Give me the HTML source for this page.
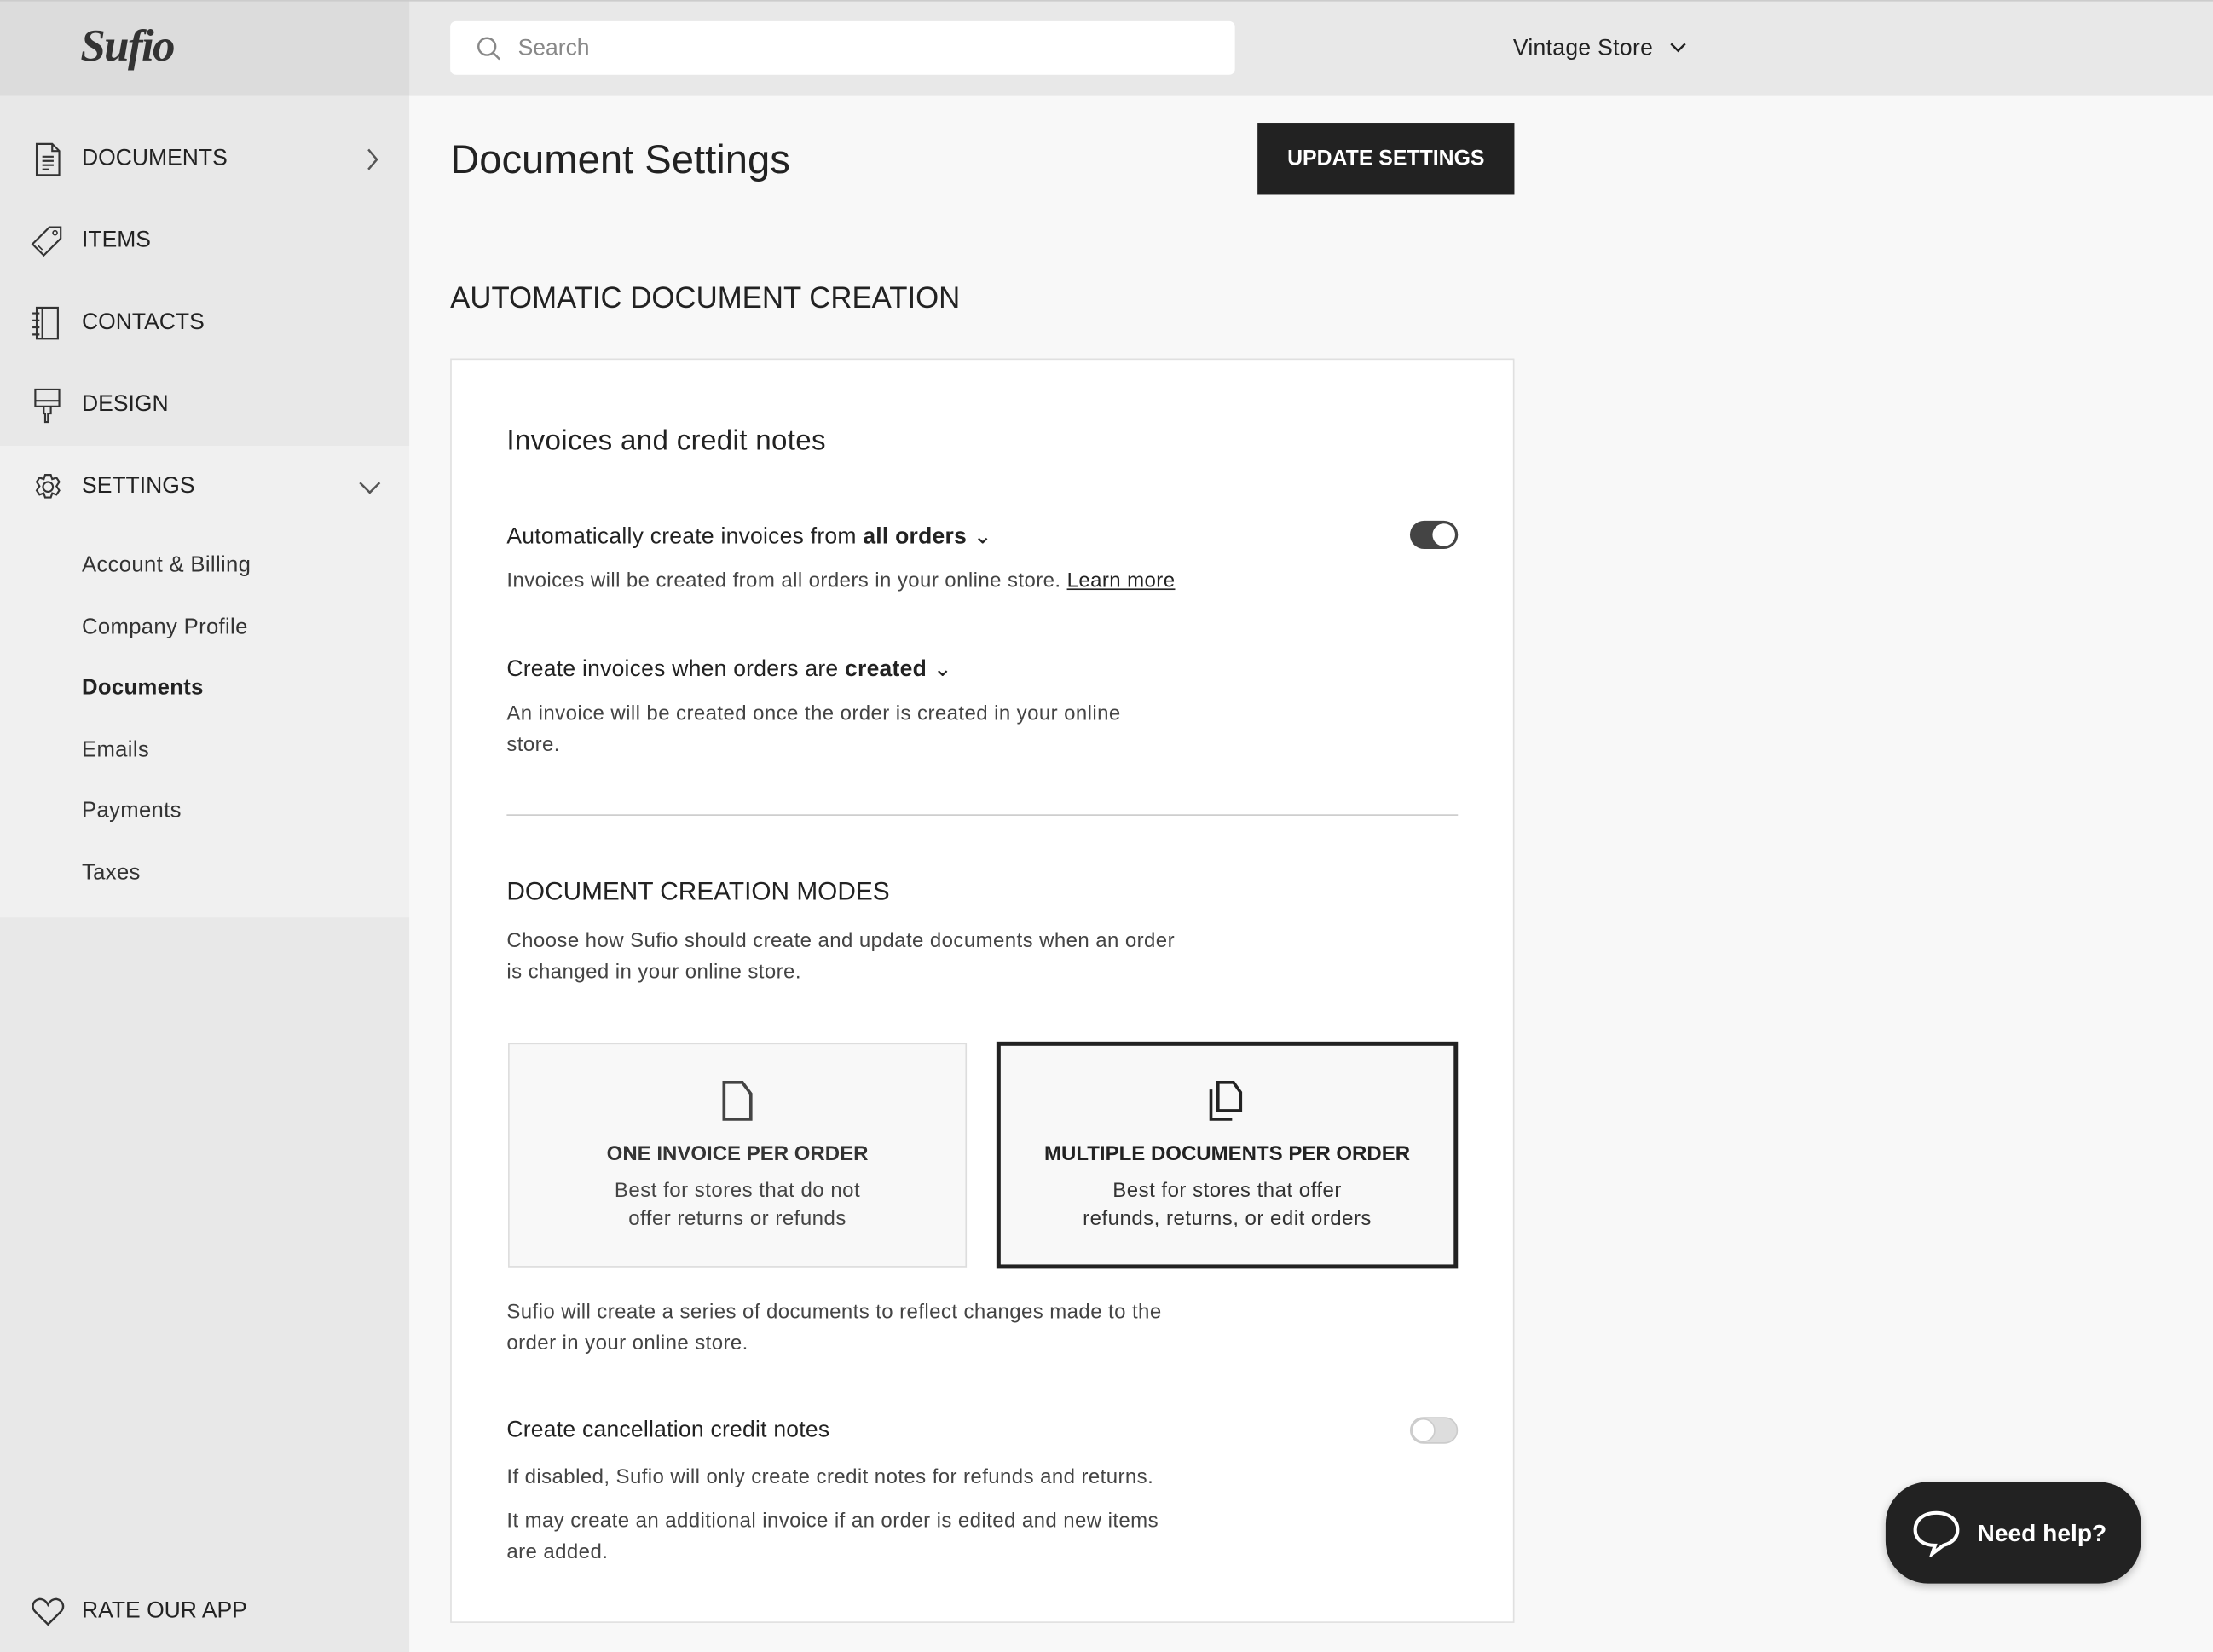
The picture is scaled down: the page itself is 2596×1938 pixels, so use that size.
<!DOCTYPE html>
<html><head><meta charset="utf-8"><style>
*{box-sizing:border-box;margin:0;padding:0}
html,body{width:2596px;height:1938px;overflow:hidden;background:#f8f8f8}
#w{width:1568px;height:1171px;transform:scale(1.65561);transform-origin:0 0;position:relative;font-family:"Liberation Sans",sans-serif;color:#222}
.a{position:absolute;white-space:nowrap}
.sb{position:absolute;left:0;width:290px}
.nav{position:absolute;left:58px;font-size:16px;color:#222;transform:translateY(-50%)}
.sub{position:absolute;left:58px;font-size:15.5px;letter-spacing:0.2px;color:#333;transform:translateY(-50%)}
.t{transform:translateY(-50%)}
.p{font-size:14.5px;letter-spacing:0.25px;color:#444;line-height:22px}
svg{position:absolute}
</style></head><body><div id="w">
<div class="a" style="left:0;top:0;width:1568px;height:68px;background:#e8e8e8;border-top:1px solid #ccc"></div>
<div class="sb" style="top:0;height:68px;background:#dcdcdc;border-top:1px solid #ccc"></div>
<div class="a" style="left:57px;top:14px;font-family:'Liberation Serif',serif;font-style:italic;font-size:32px;color:#333;font-weight:bold;letter-spacing:-1px">Sufio</div>
<div class="sb" style="top:68px;height:248px;background:#e8e8e8"></div>
<div class="sb" style="top:316px;height:334px;background:#f0f0f0"></div>
<div class="sb" style="top:650px;height:521px;background:#e8e8e8"></div>
<div class="a" style="left:319px;top:15px;width:556px;height:38px;background:#fff;border-radius:4px"></div>
<svg style="left:337px;top:25px" width="20" height="20" viewBox="0 0 20 20"><circle cx="8" cy="8" r="6" fill="none" stroke="#888" stroke-width="1.5"/><path d="M12.5 12.5L17 17" stroke="#888" stroke-width="1.5"/></svg>
<div class="a t" style="left:367px;top:35px;font-size:16px;color:#888">Search</div>
<div class="a t" style="left:1072px;top:35px;font-size:16px;color:#222;letter-spacing:0.2px">Vintage Store</div>
<svg style="left:1182px;top:29px" width="14" height="10" viewBox="0 0 14 10"><path d="M2 2l5 5 5-5" fill="none" stroke="#222" stroke-width="1.5"/></svg>

<svg style="left:23px;top:101px" width="22" height="24" viewBox="0 0 22 24"><path d="M3 1h11l5 5v17H3z M14 1v5h5 M7 10h8M7 13h8M7 16h8M7 19h5" fill="none" stroke="#333" stroke-width="1.3"/></svg>
<div class="nav" style="top:113px">DOCUMENTS</div>
<svg style="left:258px;top:104px" width="12" height="18" viewBox="0 0 12 18"><path d="M3 2l6 7-6 7" fill="none" stroke="#555" stroke-width="1.5"/></svg>
<svg style="left:21px;top:159px" width="24" height="24" viewBox="0 0 24 24"><path d="M14 2h8v8L10 22 2 14z" fill="none" stroke="#333" stroke-width="1.3"/><circle cx="18" cy="6" r="1.5" fill="none" stroke="#333"/><path d="M6 15l3 3" stroke="#333"/></svg>
<div class="nav" style="top:171px">ITEMS</div>
<svg style="left:22px;top:217px" width="22" height="24" viewBox="0 0 22 24"><path d="M4 1h15v22H4z M8 1v22 M1 5h5M1 10h5M1 15h5M1 20h5" fill="none" stroke="#333" stroke-width="1.3"/></svg>
<div class="nav" style="top:229px">CONTACTS</div>
<svg style="left:23px;top:275px" width="22" height="26" viewBox="0 0 22 26"><path d="M2 1h17v12H2z M2 9h17 M8 13h5v5h-2v6h-2v-6h-1z" fill="none" stroke="#333" stroke-width="1.3"/></svg>
<div class="nav" style="top:287px">DESIGN</div>
<svg style="left:22px;top:333px" width="24" height="24" viewBox="0 0 24 24"><path d="M10 1h4l1 3 3-1 2 3-2 3 2 3-2 3-3-1-1 3h-4l-1-3-3 1-2-3 2-3-2-3 2-3 3 1z" fill="none" stroke="#333" stroke-width="1.3" transform="translate(0 2.5)"/><circle cx="12" cy="12" r="3.5" fill="none" stroke="#333" stroke-width="1.3"/></svg>
<div class="nav" style="top:345px">SETTINGS</div>
<svg style="left:253px;top:339px" width="18" height="12" viewBox="0 0 18 12"><path d="M2 3l7 7 7-7" fill="none" stroke="#555" stroke-width="1.5"/></svg>
<div class="sub" style="top:401px">Account &amp; Billing</div>
<div class="sub" style="top:445px">Company Profile</div>
<div class="sub" style="top:488px;font-weight:bold;color:#222">Documents</div>
<div class="sub" style="top:532px">Emails</div>
<div class="sub" style="top:575px">Payments</div>
<div class="sub" style="top:619px">Taxes</div>
<svg style="left:22px;top:1131px" width="24" height="22" viewBox="0 0 24 22"><path d="M12 20L3 11C0 8 1 3 6 2c3 0 5 2 6 4 1-2 3-4 6-4 5 1 6 6 3 9z" fill="none" stroke="#333" stroke-width="1.5"/></svg>
<div class="nav" style="top:1142px">RATE OUR APP</div>

<div class="a t" style="left:319px;top:114px;font-size:28.5px;color:#222">Document Settings</div>
<div class="a" style="left:891px;top:87px;width:182px;height:51px;background:#222;color:#fff;font-size:15px;font-weight:bold;line-height:51px;text-align:center">UPDATE SETTINGS</div>
<div class="a t" style="left:319px;top:212px;font-size:21px;color:#222">AUTOMATIC DOCUMENT CREATION</div>
<div class="a" style="left:319px;top:254px;width:754px;height:896px;background:#fff;border:1px solid #e0e0e0"></div>
<div class="a t" style="left:359px;top:313px;font-size:20px;letter-spacing:0.2px">Invoices and credit notes</div>
<div class="a t" style="left:359px;top:380px;font-size:16px;letter-spacing:0.15px">Automatically create invoices from <b>all orders</b> &#8964;</div>
<div class="a" style="left:999px;top:369px;width:34px;height:20px;border-radius:10px;background:#444"></div>
<div class="a" style="left:1015px;top:371px;width:16px;height:16px;border-radius:8px;background:#fff"></div>
<div class="a t p" style="left:359px;top:412px">Invoices will be created from all orders in your online store. <u style="color:#222">Learn more</u></div>
<div class="a t" style="left:359px;top:474px;font-size:16px;letter-spacing:0.15px">Create invoices when orders are <b>created</b> &#8964;</div>
<div class="a p" style="left:359px;top:495px">An invoice will be created once the order is created in your online<br>store.</div>
<div class="a" style="left:359px;top:577px;width:674px;height:1px;background:#ccc"></div>
<div class="a t" style="left:359px;top:632px;font-size:18px">DOCUMENT CREATION MODES</div>
<div class="a p" style="left:359px;top:656px">Choose how Sufio should create and update documents when an order<br>is changed in your online store.</div>
<div class="a" style="left:360px;top:739px;width:325px;height:159px;background:#f8f8f8;border:1px solid #ddd"></div>
<svg style="left:511px;top:765px" width="24" height="30" viewBox="0 0 24 30"><path d="M2 2h13l6 8v18H2z" fill="none" stroke="#444" stroke-width="2.2"/></svg>
<div class="a" style="left:360px;top:810px;width:325px;text-align:center;font-size:14.5px;font-weight:bold;color:#333">ONE INVOICE PER ORDER</div>
<div class="a" style="left:360px;top:834px;width:325px;text-align:center;font-size:14.5px;letter-spacing:0.3px;line-height:20px;color:#444">Best for stores that do not<br>offer returns or refunds</div>
<div class="a" style="left:706px;top:738px;width:327px;height:161px;background:#f8f8f8;border:3px solid #222"></div>
<svg style="left:855px;top:765px" width="28" height="30" viewBox="0 0 28 30"><path d="M8 2h11l5 7v13H8z" fill="none" stroke="#222" stroke-width="2.2"/><path d="M3 7v21h15" fill="none" stroke="#222" stroke-width="2.2"/></svg>
<div class="a" style="left:706px;top:810px;width:327px;text-align:center;font-size:14.5px;font-weight:bold;color:#222">MULTIPLE DOCUMENTS PER ORDER</div>
<div class="a" style="left:706px;top:834px;width:327px;text-align:center;font-size:14.5px;letter-spacing:0.3px;line-height:20px;color:#333">Best for stores that offer<br>refunds, returns, or edit orders</div>
<div class="a p" style="left:359px;top:919px">Sufio will create a series of documents to reflect changes made to the<br>order in your online store.</div>
<div class="a t" style="left:359px;top:1014px;font-size:16px;letter-spacing:0.15px">Create cancellation credit notes</div>
<div class="a" style="left:999px;top:1004px;width:34px;height:19px;border-radius:10px;background:#ddd;border:1px solid #ccc"></div>
<div class="a" style="left:1000px;top:1005px;width:17px;height:17px;border-radius:9px;background:#fff;border:1px solid #ccc"></div>
<div class="a t p" style="left:359px;top:1047px">If disabled, Sufio will only create credit notes for refunds and returns.</div>
<div class="a p" style="left:359px;top:1067px">It may create an additional invoice if an order is edited and new items<br>are added.</div>
<div class="a" style="left:1336px;top:1050px;width:181px;height:72px;border-radius:30px;background:#222;box-shadow:0 2px 6px rgba(0,0,0,.25)"></div>
<svg style="left:1354px;top:1069px" width="36" height="34" viewBox="0 0 36 34"><path d="M18 3C9 3 3 8 3 15c0 7 6 11 14 11l-2 6 8-6c7-2 10-6 10-11 0-7-6-12-15-12z" fill="none" stroke="#fff" stroke-width="2.5"/></svg>
<div class="a t" style="left:1401px;top:1087px;font-size:17px;color:#fff;font-weight:bold">Need help?</div>
</div></body></html>
